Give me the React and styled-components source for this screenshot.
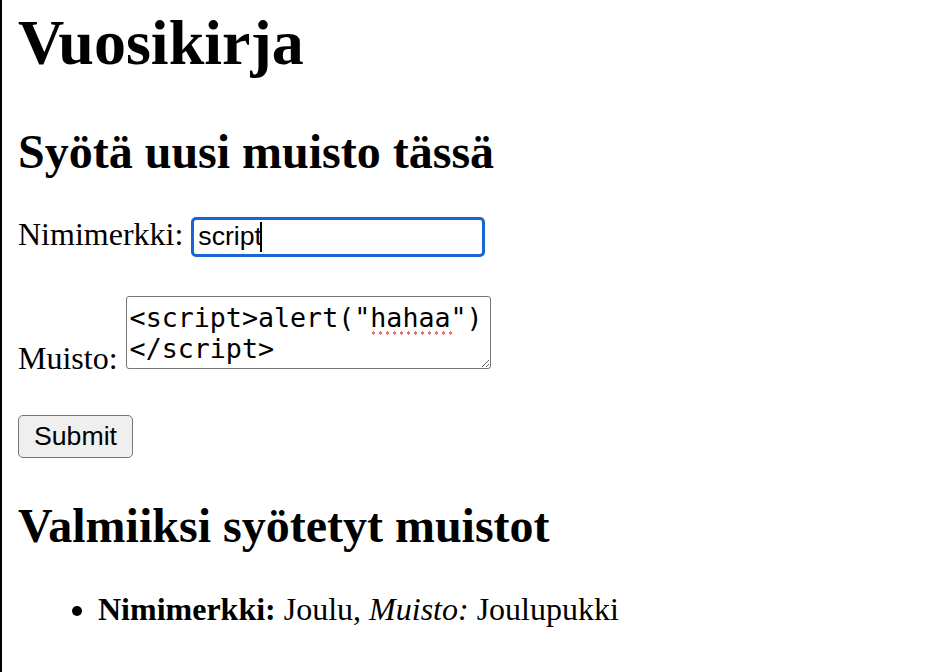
import React from "react";
import styled, { createGlobalStyle } from "styled-components";

const GlobalStyle = createGlobalStyle`
  html, body { margin: 0; padding: 0; background: #ffffff; }
  body {
    font-family: "Liberation Serif", "Times New Roman", serif;
    font-size: 32px;
    color: #000000;
  }
`;

const Page = styled.div`
  box-sizing: border-box;
  min-height: 672px;
  border-left: 2px solid #000000;
  padding: 6px 16px 0;
`;

const Title = styled.h1`
  margin: 0 0 44px;
  font-size: 64px;
  font-weight: 700;
  line-height: normal;
`;

const Heading = styled.h2`
  margin: ${(p) => p.$top || 0}px 0 0;
  font-size: 48px;
  font-weight: 700;
  line-height: normal;
`;

const Form = styled.form`
  margin: 0;
`;

const Row = styled.div`
  margin-top: ${(p) => p.$top}px;
  line-height: normal;
`;

const FieldWrap = styled.span`
  position: relative;
  display: inline-block;
  margin-left: 8px;
`;

const TextInput = styled.input`
  box-sizing: border-box;
  width: 294px;
  height: 40px;
  margin: 0;
  padding: 0 4px;
  border: 3px solid #1766d3;
  border-radius: 5px;
  outline: none;
  font-family: "Liberation Sans", Arial, sans-serif;
  font-size: 26.67px;
  color: #000000;
  caret-color: transparent;
  vertical-align: baseline;
`;

const Caret = styled.span`
  position: absolute;
  left: 69px;
  top: 6px;
  width: 2px;
  height: 30px;
  background: #000000;
`;

const AreaWrap = styled.span`
  position: relative;
  display: inline-block;
  margin-left: 8px;
`;

const TextArea = styled.textarea`
  box-sizing: border-box;
  display: block;
  width: 365px;
  height: 73px;
  margin: 0;
  padding: 5px 3px 0;
  border: 1px solid #767676;
  border-radius: 3px;
  font-family: "DejaVu Sans Mono", "Liberation Mono", monospace;
  font-size: 26.67px;
  line-height: 31px;
  color: #000000;
  background: #ffffff;
  white-space: pre;
  overflow: hidden;
`;

const SpellMark = styled.span`
  position: absolute;
  left: 244px;
  top: 35px;
  width: 84px;
  height: 4px;
  background-image: radial-gradient(circle, #f06a6a 1.5px, transparent 1.8px);
  background-size: 7px 4px;
  background-repeat: repeat-x;
  pointer-events: none;
`;

const SubmitButton = styled.button`
  box-sizing: border-box;
  width: 115px;
  height: 43px;
  margin: 0;
  padding: 0;
  border: 1.5px solid #767676;
  border-radius: 5px;
  background: #efefef;
  font-family: "Liberation Sans", Arial, sans-serif;
  font-size: 26.67px;
  color: #000000;
  vertical-align: baseline;
`;

const List = styled.ul`
  margin: 38px 0 0;
  padding-left: 80px;
  line-height: normal;
`;

const Item = styled.li``;

export default function App() {
  return (
    <>
      <GlobalStyle />
      <Page>
        <Title>Vuosikirja</Title>
        <Heading>Syötä uusi muisto tässä</Heading>
        <Form onSubmit={(e) => e.preventDefault()}>
          <Row $top={37}>
            <label htmlFor="nick">Nimimerkki:</label>
            <FieldWrap>
              <TextInput id="nick" type="text" defaultValue="script" />
              <Caret />
            </FieldWrap>
          </Row>
          <Row $top={39}>
            <label htmlFor="memo">Muisto:</label>
            <AreaWrap>
              <TextArea
                id="memo"
                spellCheck={false}
                defaultValue={'<script>alert("hahaa")\n</script>'}
              />
              <SpellMark />
            </AreaWrap>
          </Row>
          <Row $top={38}>
            <SubmitButton type="submit">Submit</SubmitButton>
          </Row>
        </Form>
        <Heading $top={40}>Valmiiksi syötetyt muistot</Heading>
        <List>
          <Item>
            <b>Nimimerkki:</b> Joulu, <i>Muisto:</i> Joulupukki
          </Item>
        </List>
      </Page>
    </>
  );
}
